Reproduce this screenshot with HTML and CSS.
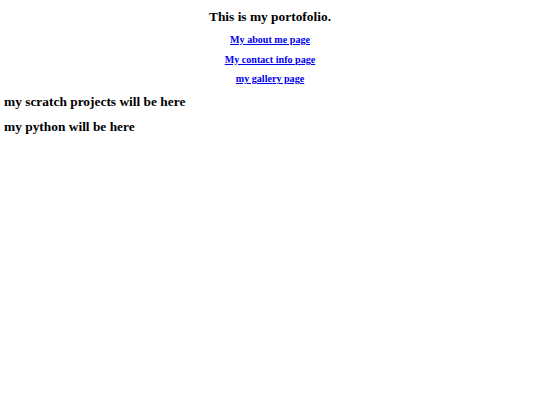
FILE: index.html
```html
<!DOCTYPE html>
<html>
<head>
<meta charset="utf-8">
<title>portfolio</title>
<link rel="stylesheet" href="styles.css">
</head>
<body>
<h2 class="title">This is my portofolio.</h2>
<h3 class="nav"><a href="#">My about me page</a></h3>
<h3 class="nav"><a href="#">My contact info page</a></h3>
<h3 class="nav"><a href="#">my gallery page</a></h3>
<h2 class="section">my scratch projects will be here</h2>
<h2 class="section">my python will be here</h2>
</body>
</html>
```
FILE: styles.css
```css
body {
  margin: 0;
  padding: 0 4px;
  font-family: "Liberation Serif", "Times New Roman", serif;
  background: #fff;
  color: #000;
}
.title {
  font-size: 13.4px;
  line-height: 13.8px;
  margin: 9.5px 0 12px;
  text-align: center;
}
.nav {
  font-size: 10.1px;
  line-height: 10.8px;
  margin: 8.7px 0;
  text-align: center;
}
.nav a {
  color: #0000ee;
}
.section {
  font-size: 13.4px;
  line-height: 13.8px;
  margin: 10.4px 0;
}
```
